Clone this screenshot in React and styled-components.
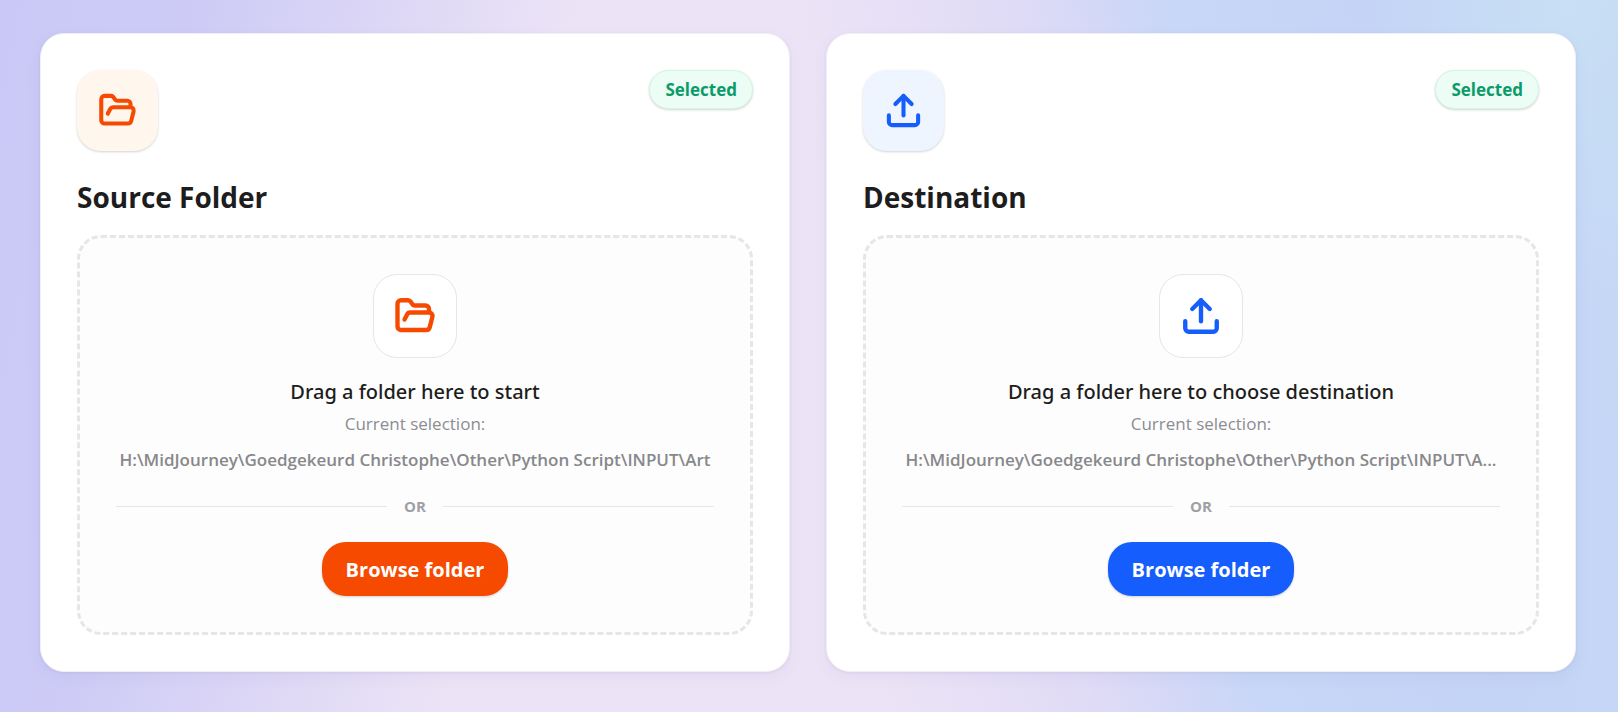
import React from "react";
import styled, { createGlobalStyle } from "styled-components";
import { FolderOpen, Upload } from "lucide-react";

const GlobalStyle = createGlobalStyle`
  *, *::before, *::after { box-sizing: border-box; }
  body {
    margin: 0;
    font-family: "Segoe UI", "Open Sans", "Noto Sans", sans-serif;
    color: #1d1d20;
  }
`;

const Page = styled.main`
  min-height: 100vh;
  padding: 33px 42px 40px 40px;
  display: grid;
  grid-template-columns: repeat(2, minmax(0, 1fr));
  gap: 36px;
  align-items: start;
  background:
    radial-gradient(ellipse 200px 300px at 97% 0%, #c8dff4, rgba(200, 223, 244, 0)),
    linear-gradient(101deg, #cac8f6 0%, #cdcbf6 11%, rgba(205, 203, 246, 0) 33%),
    linear-gradient(83deg, #ece3f6 0%, #ece3f6 52%, #e0dbf6 64%, #c8d6f7 74%, #c4d4f6 88%, #c6d8f6 100%);
`;

const Card = styled.section`
  padding: 36px;
  border: 1px solid #f1f0f6;
  border-radius: 24px;
  background: #fff;
  box-shadow: 0 6px 18px rgba(60, 50, 130, 0.04), 0 1px 3px rgba(60, 50, 130, 0.08);
`;

const CardTop = styled.div`
  display: flex;
  justify-content: space-between;
  align-items: flex-start;
`;

const Tile = styled.div`
  width: 81px;
  height: 81px;
  display: grid;
  place-items: center;
  border-radius: 24px;
  color: ${(p) => p.$accent};
  background: ${(p) => p.$tint};
  box-shadow: 0 1px 3px rgba(0, 0, 0, 0.1), 0 1px 2px rgba(0, 0, 0, 0.08);
`;

const Badge = styled.span`
  padding: 1px 15px 0;
  border: 1px solid #d0f7e3;
  border-radius: 20px;
  background: #ecfdf5;
  color: #0b9b69;
  font-size: 17px;
  font-weight: 700;
  line-height: 36px;
  box-shadow: 0 1px 3px rgba(0, 0, 0, 0.1), 0 1px 2px rgba(0, 0, 0, 0.08);
`;

const Title = styled.h2`
  margin: 25px 0 17px;
  font-size: 28px;
  font-weight: 700;
  line-height: 42px;
`;

const DropZone = styled.div`
  padding: 36px;
  display: flex;
  flex-direction: column;
  align-items: center;
  border: 3px dashed #e6e6e9;
  border-radius: 24px;
  background: #fdfdfd;
  text-align: center;
`;

const DropIcon = styled.div`
  width: 84px;
  height: 84px;
  display: grid;
  place-items: center;
  border: 1px solid #e6e6e9;
  border-radius: 24px;
  background: #fff;
  color: ${(p) => p.$accent};
`;

const Prompt = styled.p`
  margin: 18px 0 0;
  font-family: "Segoe UI", "Noto Sans", sans-serif;
  font-size: 20px;
  font-weight: 500;
  line-height: 32px;
`;

const Caption = styled.p`
  margin: 0;
  font-size: 17px;
  line-height: 32px;
  color: #8c8c92;
`;

const Path = styled.p`
  margin: 4px 0 0;
  max-width: 100%;
  font-size: 17px;
  font-weight: 600;
  line-height: 32px;
  color: #88888c;
  white-space: nowrap;
`;

const Divider = styled.div`
  align-self: stretch;
  margin: 19px 0 25px;
  display: flex;
  align-items: center;
  gap: 17px;
  color: #9f9fa6;
  font-size: 15px;
  font-weight: 700;
  line-height: 22px;

  &::before,
  &::after {
    content: "";
    flex: 1;
    height: 1px;
    background: #e6e6e9;
  }
`;

const BrowseButton = styled.button`
  padding: 1px 24px 0;
  border: 0;
  border-radius: 24px;
  background: ${(p) => p.$accent};
  color: #fff;
  font-family: inherit;
  font-size: 20px;
  font-weight: 700;
  line-height: 53px;
  cursor: pointer;
  box-shadow: 0 1px 3px rgba(0, 0, 0, 0.1), 0 1px 2px rgba(0, 0, 0, 0.08);
`;

function FolderCard({ title, icon: Icon, accent, tint, prompt, path }) {
  return (
    <Card>
      <CardTop>
        <Tile $accent={accent} $tint={tint}>
          <Icon size={39} strokeWidth={2.5} />
        </Tile>
        <Badge>Selected</Badge>
      </CardTop>
      <Title>{title}</Title>
      <DropZone>
        <DropIcon $accent={accent}>
          <Icon size={42} strokeWidth={2.5} />
        </DropIcon>
        <Prompt>{prompt}</Prompt>
        <Caption>Current selection:</Caption>
        <Path>{path}</Path>
        <Divider>OR</Divider>
        <BrowseButton type="button" $accent={accent}>Browse folder</BrowseButton>
      </DropZone>
    </Card>
  );
}

export default function App() {
  return (
    <>
      <GlobalStyle />
      <Page>
        <FolderCard
          title="Source Folder"
          icon={FolderOpen}
          accent="#f64a00"
          tint="#fff6ed"
          prompt="Drag a folder here to start"
          path={"H:\\MidJourney\\Goedgekeurd Christophe\\Other\\Python Script\\INPUT\\Art"}
        />
        <FolderCard
          title="Destination"
          icon={Upload}
          accent="#155dfc"
          tint="#eff5ff"
          prompt="Drag a folder here to choose destination"
          path={"H:\\MidJourney\\Goedgekeurd Christophe\\Other\\Python Script\\INPUT\\A..."}
        />
      </Page>
    </>
  );
}
